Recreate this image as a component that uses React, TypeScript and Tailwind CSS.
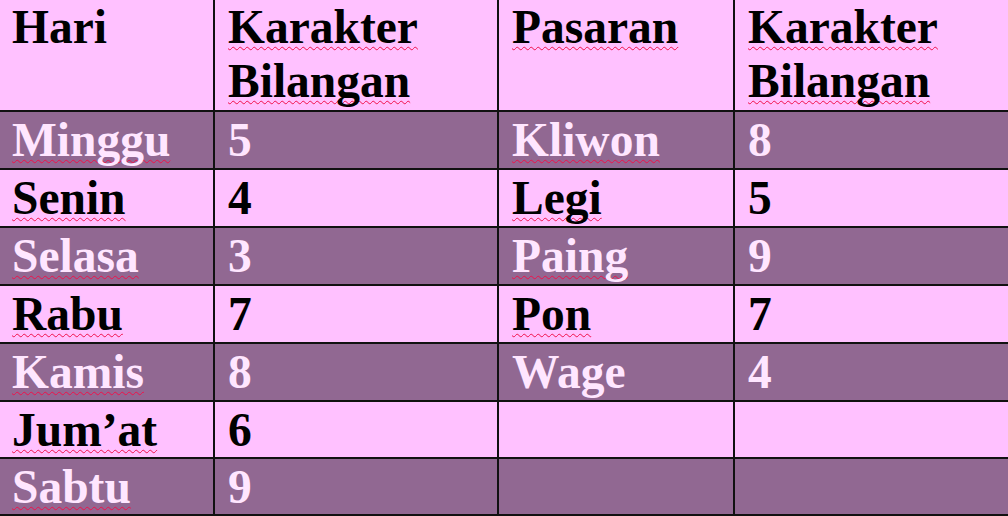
const rows = [
  { hari: "Minggu", a: "5", pasaran: "Kliwon", b: "8", check: true },
  { hari: "Senin", a: "4", pasaran: "Legi", b: "5", check: true },
  { hari: "Selasa", a: "3", pasaran: "Paing", b: "9", check: true },
  { hari: "Rabu", a: "7", pasaran: "Pon", b: "7", check: true },
  { hari: "Kamis", a: "8", pasaran: "Wage", b: "4", check: false },
  { hari: "Jum\u2019at", a: "6", pasaran: "", b: "", check: true },
  { hari: "Sabtu", a: "9", pasaran: "", b: "", check: true },
];

// red squiggle like a word processor's spell check
const squiggle =
  "underline decoration-wavy decoration-[#f0104a] decoration-1 underline-offset-[3px] [text-decoration-skip-ink:none]";

const Word = ({ text, check = true }: { text: string; check?: boolean }) => {
  if (!text) return null;
  if (!check) return <span>{text}</span>;
  return <span className={squiggle}>{text}</span>;
};

export default function App() {
  return (
    <div
      className="w-[1008px] h-[516px] overflow-hidden bg-[#111] text-[47.5px] font-bold leading-[54px]"
      style={{ fontFamily: '"Liberation Serif", "Times New Roman", serif' }}
    >
      <div className="grid grid-cols-[213px_282px_234px_273px] grid-rows-[110px_56px_56px_56px_56px_56px_55px_55px] gap-[2px] pb-[2px]">
        <div className="bg-[#ffc1ff] text-black pl-3">
          <Word text="Hari" check={false} />
        </div>
        <div className="bg-[#ffc1ff] text-black pl-[13px]">
          <Word text="Karakter" />
          <br />
          <Word text="Bilangan" />
        </div>
        <div className="bg-[#ffc1ff] text-black pl-[13px]">
          <Word text="Pasaran" />
        </div>
        <div className="bg-[#ffc1ff] text-black pl-[13px]">
          <Word text="Karakter" />
          <br />
          <Word text="Bilangan" />
        </div>

        {rows.map((r, i) => {
          const cell =
            i % 2 === 0
              ? "bg-[#916892] text-[#ffe6ff] pt-[1px]"
              : "bg-[#ffc1ff] text-black pt-[1px]";
          return [
            <div key={`h${i}`} className={`${cell} pl-3`}>
              <Word text={r.hari} />
            </div>,
            <div key={`a${i}`} className={`${cell} pl-[13px]`}>
              {r.a}
            </div>,
            <div key={`p${i}`} className={`${cell} pl-[13px]`}>
              <Word text={r.pasaran} check={r.check} />
            </div>,
            <div key={`b${i}`} className={`${cell} pl-[13px]`}>
              {r.b}
            </div>,
          ];
        })}
      </div>
    </div>
  );
}
